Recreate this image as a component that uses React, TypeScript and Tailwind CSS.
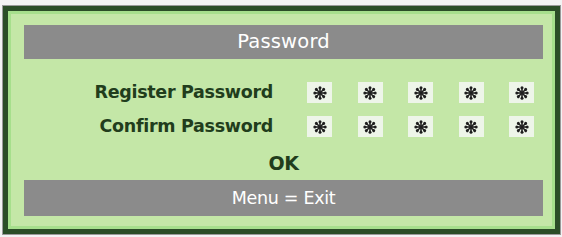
import React from "react";

function Star() {
  const arms = [0, 45, 90, 135];
  return (
    <svg width="14" height="14" viewBox="-7 -7 14 14">
      {arms.map((a) => (
        <g key={a} transform={`rotate(${a})`}>
          <line x1="0" y1="-5" x2="0" y2="5" stroke="#1f1f1f" strokeWidth="1.6" />
          <circle cx="0" cy="-5.2" r="1.5" fill="#1f1f1f" />
          <circle cx="0" cy="5.2" r="1.5" fill="#1f1f1f" />
        </g>
      ))}
      <circle cx="0" cy="0" r="1.6" fill="#1f1f1f" />
    </svg>
  );
}

function Row({ label }: { label: string }) {
  return (
    <div className="flex items-center h-[21px]">
      <div className="w-[249px] text-right text-[17.5px] font-bold text-[#213d1c] leading-none tracking-[-0.3px]">
        {label}
      </div>
      <div className="ml-[34px] flex gap-[25.5px]">
        {[0, 1, 2, 3, 4].map((i) => (
          <div key={i} className="w-[25px] h-[21px] bg-[#eef5e9] flex items-center justify-center">
            <Star />
          </div>
        ))}
      </div>
    </div>
  );
}

export default function App() {
  return (
    <div
      className="w-[562px] h-[237px] bg-[#f3f3f3] overflow-hidden"
      style={{ fontFamily: '"DejaVu Sans", Verdana, sans-serif' }}
    >
      <div className="ml-[3px] mt-[6px] w-[557px] h-[228px] border-[5px] border-[#2b4d27] bg-[#c4e7a7] shadow-[inset_0_0_0_3px_#a6df8c,0_0_0_1px_#9a9a9a] pl-[16px] pr-[12px] pt-[14px] flex flex-col">
        <div className="h-[34px] bg-[#8b8b8b] flex items-center justify-center text-white text-[19.5px] tracking-[0.2px]">
          Password
        </div>
        <div className="mt-[23px] flex flex-col gap-[13px]">
          <Row label="Register Password" />
          <Row label="Confirm Password" />
        </div>
        <div className="mt-[16px] h-[20px] leading-[20px] text-center text-[19px] font-bold text-[#213d1c] tracking-[-0.5px]">OK</div>
        <div className="mt-[7px] h-[36px] bg-[#8b8b8b] flex items-center justify-center text-white text-[17.5px] tracking-[-0.3px]">
          Menu = Exit
        </div>
      </div>
    </div>
  );
}
